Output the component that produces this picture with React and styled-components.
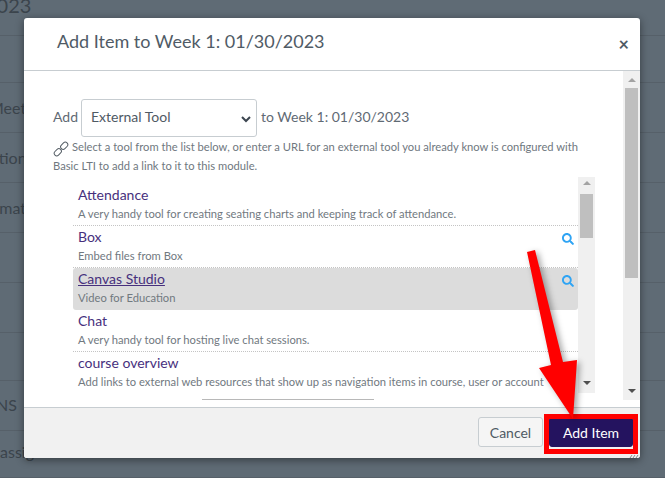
import React from 'react';
import styled, { createGlobalStyle } from 'styled-components';
import { FaSearch } from 'react-icons/fa';

const GlobalStyle = createGlobalStyle`
  html, body { margin: 0; padding: 0; background: #5f6b75; }
  * { box-sizing: border-box; }
  body { font-family: Lato, "Open Sans", sans-serif; overflow: hidden; }
`;

const Page = styled.div`
  position: relative;
  width: 665px;
  height: 478px;
  overflow: hidden;
  background: #5f6b75;
`;

const BackRow = styled.div`
  height: ${({ h }) => h}px;
  border-bottom: 1px solid #566069;
  color: #3b444c;
  font-size: ${({ big }) => (big ? 20 : 16)}px;
  line-height: ${({ lh, h }) => lh || h}px;
  white-space: nowrap;
  overflow: hidden;
  text-indent: ${({ shift }) => shift || 0}px;
`;

const Modal = styled.div`
  position: absolute;
  left: 24px;
  top: 18px;
  width: 616px;
  height: 440px;
  background: #fff;
  border-radius: 3px;
  box-shadow: 0 2px 8px rgba(0, 0, 0, 0.45);
  display: flex;
  flex-direction: column;
  overflow: hidden;
`;

const Header = styled.div`
  height: 53px;
  flex: none;
  border-bottom: 1px solid #c7cdd1;
  display: flex;
  align-items: center;
  justify-content: space-between;
  padding: 0 11px 6px 33px;
`;

const Title = styled.h1`
  margin: 0;
  font-size: 18px;
  font-weight: 400;
  color: #505b66;
`;

const Close = styled.span`
  font-size: 18px;
  font-weight: 700;
  color: #4f5a64;
  line-height: 1;
  padding-top: 6px;
`;

const Middle = styled.div`
  flex: 1;
  min-height: 0;
  display: flex;
`;

const Body = styled.div`
  flex: 1;
  min-width: 0;
  padding: 28px 0 0 29px;
  overflow: hidden;
`;

const AddRow = styled.div`
  display: flex;
  align-items: center;
  gap: 3px;
  font-size: 14px;
  color: #5f6a74;
  height: 38px;
  line-height: 34px;
  padding-bottom: 2px;
`;

const SelectBox = styled.div`
  width: 176px;
  height: 38px;
  margin: 0 1px -2px 0;
  border: 1px solid #c7cdd1;
  border-radius: 3px;
  background: #fff;
  display: flex;
  align-items: center;
  justify-content: space-between;
  padding: 0 3px 3px 9px;
  color: #4f5a64;
  font-size: 14px;
  svg { margin-top: 4px; }
`;

const Help = styled.p`
  margin: 1px 0 0;
  width: 540px;
  font-size: 11.2px;
  line-height: 18px;
  color: #6f7880;
  svg {
    vertical-align: -6px;
    margin-right: 3px;
    color: #555e66;
  }
`;

const ListWrap = styled.div`
  display: flex;
  width: 522px;
  height: 216px;
  margin: 2px 0 0 20px;
`;

const List = styled.div`
  flex: 1;
  min-width: 0;
  overflow: hidden;
  padding-top: 7px;
`;

const Item = styled.div`
  position: relative;
  height: 42px;
  padding: 0 5px;
  background: ${({ selected }) => (selected ? '#dcdcdc' : 'transparent')};
  border-radius: ${({ selected }) => (selected ? '3px' : '0')};
  border-bottom: ${({ dotted }) => (dotted ? '1px dotted #c4c4c4' : 'none')};
  white-space: nowrap;
  overflow: hidden;
`;

const ItemName = styled.div`
  font-size: 14px;
  line-height: 18px;
  height: 18px;
  margin-top: 2px;
  color: #47307d;
  text-decoration: ${({ selected }) => (selected ? 'underline' : 'none')};
`;

const ItemDesc = styled.div`
  font-size: 11.2px;
  line-height: 16px;
  margin-top: 2px;
  color: #71797f;
`;

const SearchMark = styled.span`
  position: absolute;
  right: 4px;
  top: 7px;
  color: #2fa4f4;
  font-size: 12px;
  line-height: 1;
  svg { display: block; }
`;

const Track = styled.div`
  flex: none;
  width: 17px;
  background: #f0f0f0;
  display: flex;
  flex-direction: column;
  align-items: center;
  justify-content: space-between;
  padding: ${({ top }) => top}px 0 ${({ bottom }) => bottom}px;
  margin-bottom: ${({ gap }) => gap || 0}px;
`;

const Thumb = styled.div`
  width: 13px;
  height: ${({ h }) => h}px;
  background: #bfbfbf;
  margin-top: ${({ top }) => top}px;
  margin-bottom: auto;
`;

const Arrow = styled.span`
  width: 0;
  height: 0;
  flex: none;
  border-left: 4px solid transparent;
  border-right: 4px solid transparent;
  ${({ up }) => (up ? 'border-bottom: 4px solid #a3a3a3;' : 'border-top: 4px solid #505050;')}
`;

const Rule = styled.div`
  width: 172px;
  height: 1px;
  margin: 6px 0 0 149px;
  background: #b8b8b8;
`;

const Footer = styled.div`
  flex: none;
  height: 51px;
  background: #f1f1f1;
  border-top: 1px solid #c7cdd1;
  display: flex;
  align-items: center;
  justify-content: flex-end;
  gap: 6px;
  padding: 0 7px 2px 0;
`;

const CancelButton = styled.button`
  width: 65px;
  height: 30px;
  padding: 0;
  background: #f5f5f5;
  border: 1px solid #c7cdd1;
  border-radius: 3px;
  color: #4f5a64;
  font: 400 14px Lato, sans-serif;
`;

const AddButton = styled.button`
  width: 84px;
  height: 30px;
  padding: 0;
  background: #24135f;
  border: 1px solid #24135f;
  border-radius: 3px;
  color: #fff;
  font: 400 14px Lato, sans-serif;
`;

const Highlight = styled.div`
  position: absolute;
  left: 544px;
  top: 414px;
  width: 94px;
  height: 40px;
  border: 5px solid #ff0000;
  pointer-events: none;
`;

const Grip = styled.svg`
  position: absolute;
  left: 629px;
  top: 454px;
`;

const Overlay = styled.svg`
  position: absolute;
  left: 0;
  top: 0;
  pointer-events: none;
  filter: drop-shadow(3px 2px 3px rgba(0, 0, 0, 0.35));
`;

const tools = [
  { name: 'Attendance', desc: 'A very handy tool for creating seating charts and keeping track of attendance.', dotted: true },
  { name: 'Box', desc: 'Embed files from Box', search: true, dotted: true },
  { name: 'Canvas Studio', desc: 'Video for Education', search: true, selected: true },
  { name: 'Chat', desc: 'A very handy tool for hosting live chat sessions.', dotted: true },
  { name: 'course overview', desc: 'Add links to external web resources that show up as navigation items in course, user or account' },
];

const backRows = [
  { h: 36, lh: 10, text: '2023', big: true, shift: -15 },
  { h: 47, text: '' },
  { h: 50, text: 'Meet', shift: -11 },
  { h: 50, text: 'Section', shift: -26 },
  { h: 50, text: 'Format', shift: -24 },
  { h: 50, text: '' },
  { h: 50, text: '' },
  { h: 48, text: '' },
  { h: 50, text: 'NS', shift: -4, lh: 48 },
  { h: 47, text: 'assignments', lh: 41 },
];

function LinkIcon() {
  return (
    <svg width="16" height="16" viewBox="0 0 16 16" fill="none" stroke="currentColor" strokeWidth="1">
      <rect x="-4" y="-2.5" width="8" height="5" rx="2.5" transform="translate(4.8 11.2) rotate(-45)" />
      <rect x="-4" y="-2.5" width="8" height="5" rx="2.5" transform="translate(11.2 4.8) rotate(-45)" />
    </svg>
  );
}

export default function App() {
  return (
    <Page>
      <GlobalStyle />
      {backRows.map((r, i) => (
        <BackRow key={i} h={r.h} lh={r.lh} big={r.big} shift={r.shift}>{r.text}</BackRow>
      ))}
      <Modal>
        <Header>
          <Title>Add Item to Week 1: 01/30/2023</Title>
          <Close>×</Close>
        </Header>
        <Middle>
          <Body>
            <AddRow>
              Add
              <SelectBox>
                External Tool
                <svg width="14" height="14" viewBox="0 0 14 14">
                  <path d="M3 5l4 4 4-4" fill="none" stroke="#3c4650" strokeWidth="2" />
                </svg>
              </SelectBox>
              to Week 1: 01/30/2023
            </AddRow>
            <Help>
              <LinkIcon />
              Select a tool from the list below, or enter a URL for an external tool you already know is configured with Basic LTI to add a link to it to this module.
            </Help>
            <ListWrap>
              <List>
                {tools.map((t) => (
                  <Item key={t.name} selected={t.selected} dotted={t.dotted}>
                    <ItemName selected={t.selected}>{t.name}</ItemName>
                    <ItemDesc>{t.desc}</ItemDesc>
                    {t.search && <SearchMark><FaSearch /></SearchMark>}
                  </Item>
                ))}
              </List>
              <Track top={4} bottom={8}>
                <Arrow up />
                <Thumb h={44} top={9} />
                <Arrow />
              </Track>
            </ListWrap>
            <Rule />
          </Body>
          <Track top={7} bottom={7} gap={7}>
            <Arrow up />
            <Thumb h={190} top={6} />
            <Arrow />
          </Track>
        </Middle>
        <Footer>
          <CancelButton>Cancel</CancelButton>
          <AddButton>Add Item</AddButton>
        </Footer>
      </Modal>
      <Highlight />
      <Grip width="10" height="5" viewBox="0 0 10 5">
        <path d="M1 4l2-3M4 4l2-3M7 4l2-3" stroke="#8a8a8a" strokeWidth="1" />
      </Grip>
      <Overlay width="665" height="478" viewBox="0 0 665 478">
        <path d="M527 252 L535 250 L563 362 L577 360 L573 419 L539 368 L551 365 Z" fill="#ff0000" />
      </Overlay>
    </Page>
  );
}
